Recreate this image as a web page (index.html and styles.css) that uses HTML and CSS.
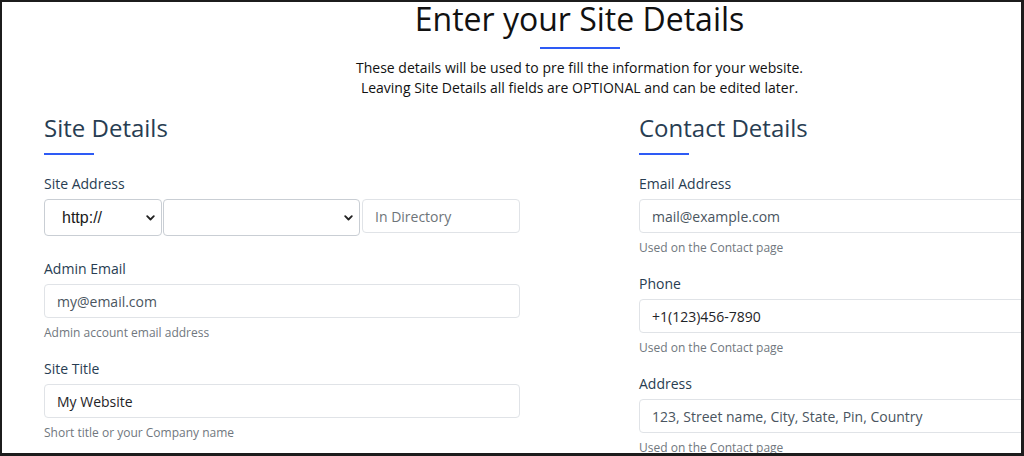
FILE: index.html
```html
<!DOCTYPE html>
<html lang="en">
<head>
<meta charset="utf-8">
<title>Enter your Site Details</title>
<link rel="stylesheet" href="styles.css">
</head>
<body>
<div class="frame">
  <div class="container">
    <header class="intro">
      <h1 class="title">Enter your Site Details</h1>
      <div class="title-bar"></div>
      <p class="lead">These details will be used to pre fill the information for your website.<br>Leaving Site Details all fields are OPTIONAL and can be edited later.</p>
    </header>
    <div class="columns">
      <section class="col">
        <h2 class="section-title">Site Details</h2>
        <div class="section-bar"></div>
        <div class="field field-plain">
          <label class="label">Site Address</label>
          <div class="address-row">
            <div class="select select-proto"><span>http://</span>
              <svg class="chev" width="9" height="6" viewBox="0 0 9 6"><path d="M1.2 1.2 L4.5 4.5 L7.8 1.2" fill="none" stroke="#222" stroke-width="1.8" stroke-linecap="round" stroke-linejoin="round"/></svg>
            </div>
            <div class="select select-domain"><span></span>
              <svg class="chev" width="9" height="6" viewBox="0 0 9 6"><path d="M1.2 1.2 L4.5 4.5 L7.8 1.2" fill="none" stroke="#222" stroke-width="1.8" stroke-linecap="round" stroke-linejoin="round"/></svg>
            </div>
            <input class="input input-dir" type="text" placeholder="In Directory">
          </div>
        </div>
        <div class="field">
          <label class="label">Admin Email</label>
          <input class="input muted" type="text" value="my@email.com">
          <small class="help">Admin account email address</small>
        </div>
        <div class="field">
          <label class="label">Site Title</label>
          <input class="input" type="text" value="My Website">
          <small class="help">Short title or your Company name</small>
        </div>
      </section>
      <section class="col">
        <h2 class="section-title">Contact Details</h2>
        <div class="section-bar"></div>
        <div class="field">
          <label class="label">Email Address</label>
          <input class="input muted" type="text" value="mail@example.com">
          <small class="help">Used on the Contact page</small>
        </div>
        <div class="field">
          <label class="label">Phone</label>
          <input class="input" type="text" value="+1(123)456-7890">
          <small class="help">Used on the Contact page</small>
        </div>
        <div class="field">
          <label class="label">Address</label>
          <input class="input muted" type="text" value="123, Street name, City, State, Pin, Country">
          <small class="help">Used on the Contact page</small>
        </div>
      </section>
    </div>
  </div>
</div>
</body>
</html>
```

FILE: styles.css
```css
* { box-sizing: border-box; }
html, body { margin: 0; padding: 0; background: #fff; }
body { font-family: "Open Sans", "Noto Sans", sans-serif; }

.frame {
  width: 1024px;
  height: 456px;
  border-style: solid;
  border-color: #1c1c1c;
  border-width: 2px 3px 3px 2px;
  overflow: hidden;
  background: #fff;
}

.container {
  width: 1071px;
  margin-left: 42px;
}

.intro { text-align: center; }
.title {
  margin: 0;
  font-size: 32px;
  font-weight: 400;
  line-height: 34px;
  color: #111;
}
.title-bar {
  width: 80px;
  height: 2px;
  background: #2e5bf5;
  margin: 11px auto 0;
}
.lead {
  margin: 9px 0 0;
  font-size: 14px;
  line-height: 20px;
  color: #111;
}

.columns {
  display: grid;
  grid-template-columns: 476px 476px;
  column-gap: 119px;
  margin-top: 15px;
}

.section-title {
  margin: 0;
  font-size: 24px;
  font-weight: 400;
  line-height: 29px;
  color: #283d52;
}
.section-bar {
  width: 50px;
  height: 2px;
  background: #2e5bf5;
  margin: 11px 0 18px;
}

.field {
  display: flex;
  flex-direction: column;
  margin-bottom: 16px;
}
.field-plain { margin-bottom: 22px; }

.label {
  font-size: 14px;
  line-height: 21px;
  color: #283d52;
  margin-bottom: 5px;
}

.input {
  height: 34px;
  width: 100%;
  border: 1px solid #e0e3e7;
  border-radius: 4px;
  padding: 0 12px;
  font-family: "Open Sans", "Noto Sans", sans-serif;
  font-size: 14px;
  color: #1f2428;
  background: #fff;
  outline: none;
}
.input.muted { color: #4a5560; }
.input::placeholder { color: #6e7479; opacity: 1; }

.help {
  margin-top: 5px;
  font-size: 12px;
  line-height: 19px;
  color: #70777e;
}

.address-row {
  display: flex;
  align-items: flex-start;
  gap: 1px;
}
.select {
  height: 37px;
  border: 1px solid #c9ced4;
  border-radius: 4px;
  display: flex;
  align-items: center;
  justify-content: space-between;
  padding: 0 6px 0 17px;
  font-family: "Liberation Sans", Arial, sans-serif;
  font-size: 16px;
  color: #1a1a1a;
  background: #fff;
}
.select-proto { width: 118px; }
.select-domain { width: 197px; }
.chev { flex: none; }
.input-dir {
  width: 158px;
  margin-left: 1px;
  color: #6e7479;
}
```
